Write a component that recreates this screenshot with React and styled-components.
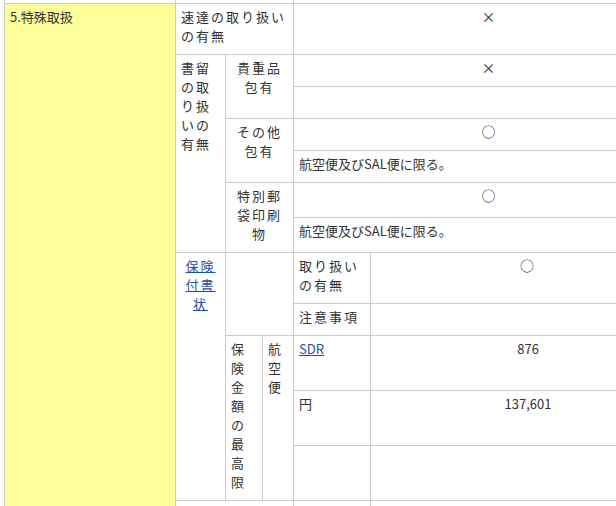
import React from 'react';
import styled, { createGlobalStyle } from 'styled-components';

const GlobalStyle = createGlobalStyle`
  html, body { margin: 0; padding: 0; background: #fff; overflow: hidden; }
  body { font-family: "Noto Sans CJK JP", "DejaVu Sans", sans-serif; }
`;

const Viewport = styled.div`
  width: 616px;
  height: 506px;
  overflow: hidden;
`;

const Table = styled.table`
  border-collapse: collapse;
  table-layout: fixed;
  width: 681px;
  margin: -18px 0 0 4px;
  font-size: 13px;
  line-height: 19px;
  color: #333;
`;

const Row = styled.tr`
  height: ${({ h }) => h}px;
`;

const Cell = styled.td`
  border: 1px solid #ccc;
  padding: 3px 5px;
  vertical-align: top;
  text-align: ${({ align }) => align || 'left'};
  background: ${({ yellow }) => (yellow ? '#ffff99' : '#fff')};
  letter-spacing: ${({ plain }) => (plain ? '0' : '2px')};
  word-break: break-all;
`;

const Link = styled.a`
  color: #1d4fa3;
  text-decoration: underline;
`;

const Mark = styled.span`
  font-size: 14px;
`;

export default function App() {
  const note = '航空便及びSAL便に限る。';
  return (
    <Viewport>
      <GlobalStyle />
      <Table>
        <colgroup>
          <col style={{ width: 171 }} />
          <col style={{ width: 50 }} />
          <col style={{ width: 37 }} />
          <col style={{ width: 31 }} />
          <col style={{ width: 77 }} />
          <col style={{ width: 315 }} />
        </colgroup>
        <tbody>
          <Row h={21}>
            <Cell />
            <Cell colSpan={3} />
            <Cell colSpan={2} />
          </Row>
          <Row h={51}>
            <Cell yellow rowSpan={13} plain>5.特殊取扱</Cell>
            <Cell colSpan={3}>速達の取り扱いの有無</Cell>
            <Cell colSpan={2} align="center"><Mark>×</Mark></Cell>
          </Row>
          <Row h={32}>
            <Cell rowSpan={6}>書留の取り扱いの有無</Cell>
            <Cell colSpan={2} rowSpan={2} align="center">貴重品包有</Cell>
            <Cell colSpan={2} align="center"><Mark>×</Mark></Cell>
          </Row>
          <Row h={32}><Cell colSpan={2} /></Row>
          <Row h={32}>
            <Cell colSpan={2} rowSpan={2} align="center">その他包有</Cell>
            <Cell colSpan={2} align="center"><Mark>○</Mark></Cell>
          </Row>
          <Row h={32}><Cell colSpan={2} plain>{note}</Cell></Row>
          <Row h={35}>
            <Cell colSpan={2} rowSpan={2} align="center">特別郵袋印刷物</Cell>
            <Cell colSpan={2} align="center"><Mark>○</Mark></Cell>
          </Row>
          <Row h={35}><Cell colSpan={2} plain>{note}</Cell></Row>
          <Row h={51}>
            <Cell rowSpan={5} align="center"><Link href="#">保険付書状</Link></Cell>
            <Cell colSpan={2} rowSpan={2} />
            <Cell>取り扱いの有無</Cell>
            <Cell align="center"><Mark>○</Mark></Cell>
          </Row>
          <Row h={32}>
            <Cell>注意事項</Cell>
            <Cell />
          </Row>
          <Row h={55}>
            <Cell rowSpan={3}>保険金額の最高限</Cell>
            <Cell rowSpan={3}>航空便</Cell>
            <Cell plain><Link href="#">SDR</Link></Cell>
            <Cell plain align="center">876</Cell>
          </Row>
          <Row h={55}>
            <Cell>円</Cell>
            <Cell plain align="center">137,601</Cell>
          </Row>
          <Row h={55}>
            <Cell />
            <Cell />
          </Row>
          <Row h={30}>
            <Cell colSpan={3} />
            <Cell />
            <Cell />
          </Row>
        </tbody>
      </Table>
    </Viewport>
  );
}
